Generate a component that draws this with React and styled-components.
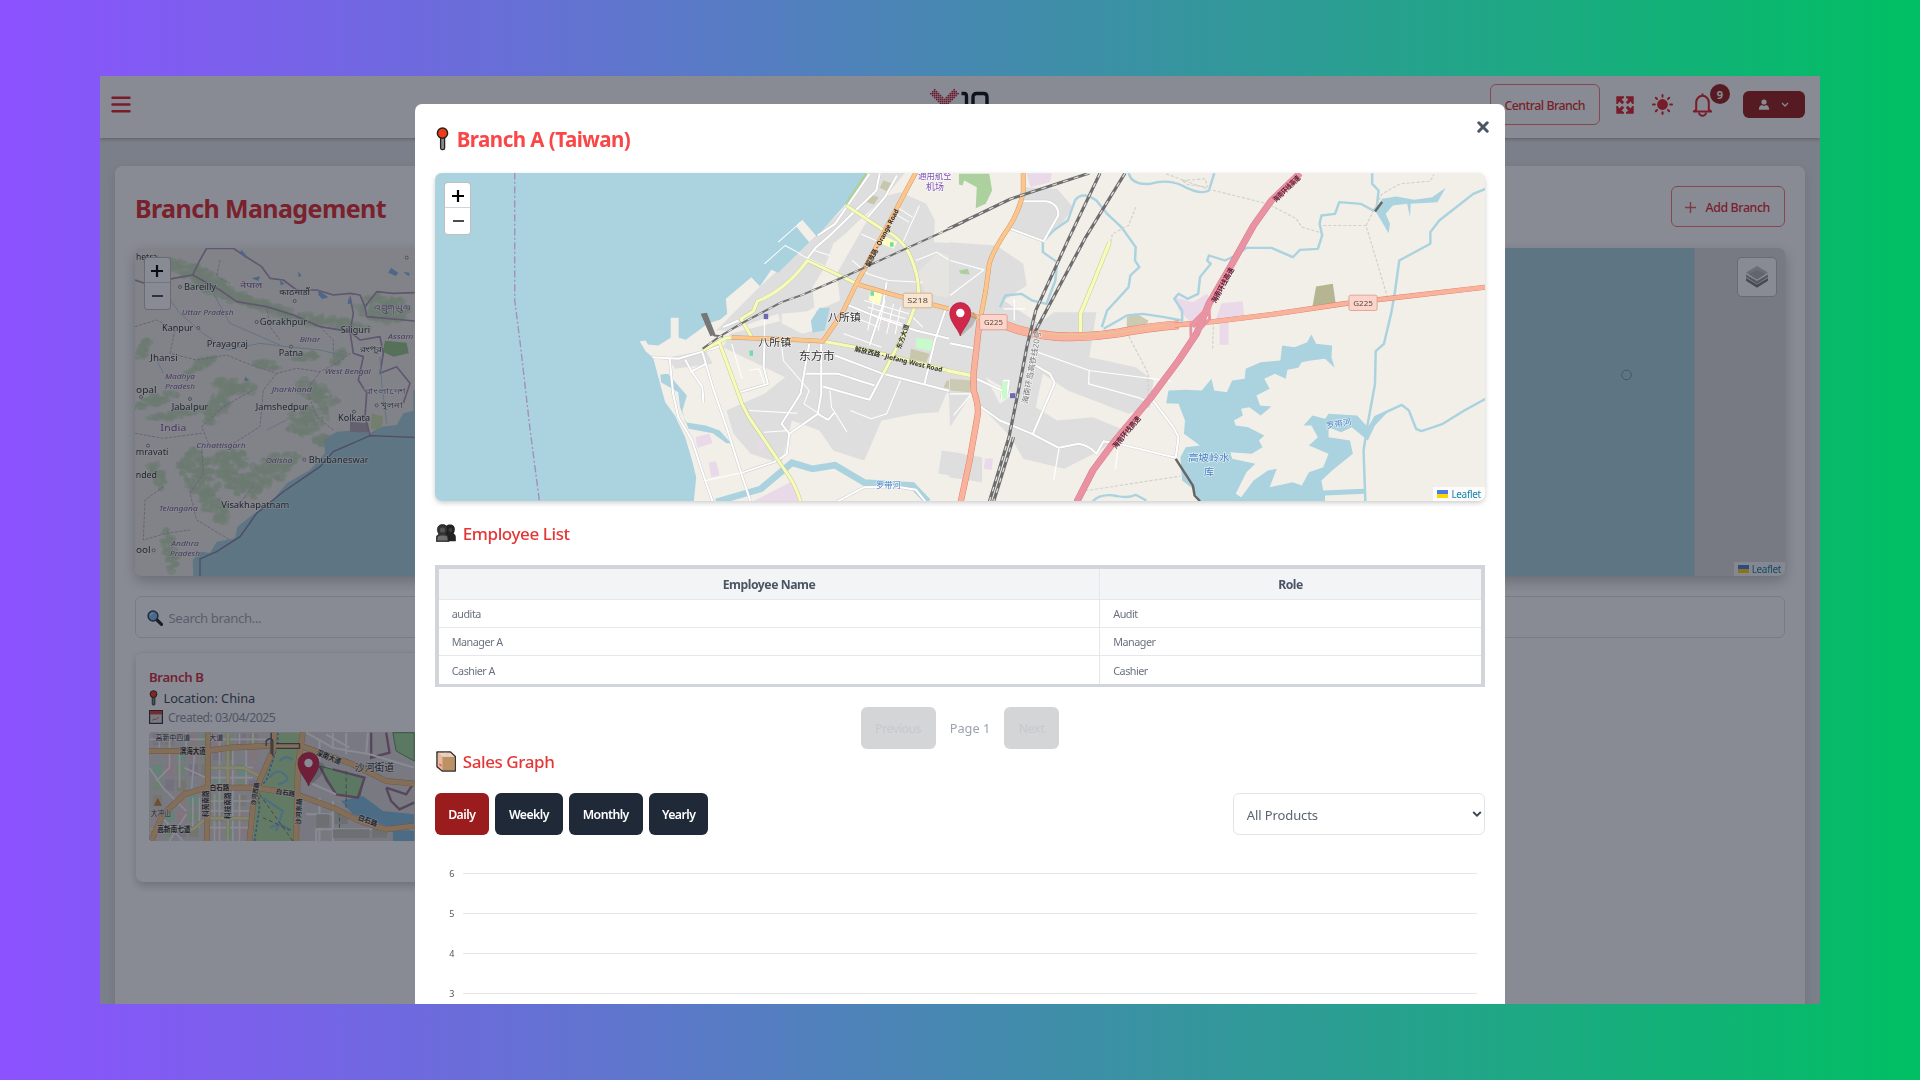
import React from "react";
import styled, { createGlobalStyle } from "styled-components";

const GlobalStyle = createGlobalStyle`
  * { box-sizing: border-box; }
  body {
    margin: 0;
    font-family: "Noto Sans", "Open Sans", "Noto Sans CJK SC", sans-serif;
  }
  svg { display: block; flex: none; }
`;

const Stage = styled.div`
  width: 1920px;
  height: 1080px;
  padding: 76px 100px;
  background: linear-gradient(90deg, #8c52ff, #00bf63);
  overflow: hidden;
`;

const Frame = styled.div`
  position: relative;
  width: 1719.5px;
  height: 928px;
  background: #e5e7eb;
  overflow: hidden;
`;

const Header = styled.header`
  display: grid;
  grid-template-columns: 1fr auto 1fr;
  align-items: start;
  height: 62px;
  background: #fff;
  box-shadow: 0 1px 4px rgba(0, 0, 0, 0.3);
`;

const MenuButton = styled.div`
  padding: 20px 0 0 11px;
`;

const LogoBox = styled.div`
  padding-top: 12px;
`;

const Tools = styled.div`
  display: flex;
  justify-content: flex-end;
  padding: 8px 14.5px 0 0;
`;

const OutlineButton = styled.div`
  display: flex;
  align-items: center;
  justify-content: center;
  gap: 9px;
  width: ${(p) => p.$width}px;
  height: 41px;
  padding-top: 1px;
  border: 1px solid #f87878;
  border-radius: 6px;
  color: #e02a30;
  font-size: 12.4px;
  font-weight: 500;
  letter-spacing: ${(p) => p.$track || 0}px;
  white-space: nowrap;
`;

const ToolIcon = styled.div`
  position: relative;
  margin-left: ${(p) => p.$left}px;
  padding-top: ${(p) => p.$top}px;
`;

const Badge = styled.div`
  position: absolute;
  left: 18px;
  top: 0;
  display: flex;
  align-items: center;
  justify-content: center;
  width: 20px;
  height: 20px;
  border-radius: 50%;
  background: #9b1c1c;
  color: #fff;
  font-size: 11px;
  font-weight: 700;
`;

const UserButton = styled.div`
  display: flex;
  align-items: center;
  justify-content: space-between;
  width: 62px;
  height: 27px;
  margin: 7px 0 0 30px;
  padding: 0 16px 0 15px;
  border-radius: 6px;
  background: #9b1c1c;
`;

const PageCard = styled.section`
  margin: 28px 14.5px 0 14.5px;
  height: 880px;
  padding: 20px 20px 0;
  border-radius: 8px;
  background: #fff;
  box-shadow: 0 4px 12px rgba(0, 0, 0, 0.12);
`;

const PageHead = styled.div`
  display: flex;
  justify-content: space-between;
  align-items: flex-start;
  height: 62px;
`;

const PageTitle = styled.h1`
  margin: 5px 0 0 0.5px;
  color: #e02a30;
  font-size: 25px;
  line-height: 34px;
  font-weight: 700;
  letter-spacing: -0.6px;
`;

const MapFrame = styled.div`
  position: relative;
  width: 100%;
  height: ${(p) => p.$height}px;
  border-radius: ${(p) => p.$radius || 7}px;
  overflow: hidden;
  background: ${(p) => p.$bg || "#ddd"};
`;

const MapShadow = styled.div`
  border-radius: 7px;
  box-shadow: ${(p) =>
    p.$soft ? "0 2px 5px rgba(0,0,0,.2)" : "0 5px 14px rgba(0,0,0,.25)"};
`;

const ZoomControl = styled.div`
  position: absolute;
  left: 9px;
  top: 9px;
  width: 27.5px;
  border: 1px solid rgba(0, 0, 0, 0.25);
  border-radius: 4px;
  background: #fff;
`;

const ZoomKey = styled.div`
  display: flex;
  align-items: center;
  justify-content: center;
  height: ${(p) => (p.$first ? 25 : 26)}px;
  padding-top: ${(p) => (p.$first ? 2 : 0)}px;
  border-bottom: ${(p) => (p.$first ? "1px solid #ccd6dc" : "0")};
`;

const LayersControl = styled.div`
  position: absolute;
  right: 8.5px;
  top: 9px;
  display: flex;
  align-items: center;
  justify-content: center;
  width: 40px;
  height: 40px;
  border: 1.5px solid rgba(0, 0, 0, 0.25);
  border-radius: 5px;
  background: #fff;
`;

const Attribution = styled.div`
  position: absolute;
  right: 0;
  bottom: 0;
  display: flex;
  align-items: center;
  gap: 3px;
  height: 14px;
  padding: 0 4px;
  background: rgba(255, 255, 255, 0.8);
  color: #1583ae;
  font-size: 10px;
  letter-spacing: -0.35px;
`;

const SearchBox = styled.div`
  display: flex;
  align-items: center;
  gap: 6px;
  height: 42px;
  margin-top: 20px;
  padding: 2px 0 0 11px;
  border: 1px solid #dcdfe4;
  border-radius: 6px;
  color: #a0a6b2;
  font-size: 13.2px;
  letter-spacing: -0.4px;
`;

const BranchCard = styled.article`
  width: 540px;
  height: 230px;
  margin: 14px 0 0 1px;
  padding: 15px 13.5px;
  border-radius: 7px;
  background: #fff;
  border-top: 1px solid #eceef1;
  box-shadow: 0 4px 9px rgba(0, 0, 0, 0.2);
`;

const BranchName = styled.div`
  height: 20px;
  color: #d12c3c;
  font-size: 13.2px;
  line-height: 19px;
  font-weight: 600;
  letter-spacing: -0.35px;
`;

const BranchLine = styled.div`
  display: flex;
  align-items: center;
  gap: ${(p) => p.$gap}px;
  height: ${(p) => p.$height}px;
  color: ${(p) => p.$color};
  font-size: ${(p) => p.$size}px;
  letter-spacing: ${(p) => p.$track || 0}px;
`;

const CardMap = styled.div`
  margin-top: 5px;
`;

const Overlay = styled.div`
  position: absolute;
  inset: 0;
  display: flex;
  justify-content: center;
  align-items: flex-start;
  padding-top: 28px;
  background: rgba(17, 24, 39, 0.5);
`;

const Modal = styled.div`
  position: relative;
  width: 1090px;
  height: 940px;
  padding: 20px;
  border-radius: 7px;
  background: #fff;
`;

const CloseButton = styled.div`
  position: absolute;
  right: 16px;
  top: 16.5px;
`;

const ModalTitle = styled.h2`
  display: flex;
  align-items: center;
  gap: 8px;
  height: 30px;
  margin: 0 0 19px;
  padding-left: 1px;
  color: #fa4646;
  font-size: 20.5px;
  font-weight: 700;
  letter-spacing: -0.52px;
`;

const SectionTitle = styled.h3`
  display: flex;
  align-items: center;
  gap: 6.5px;
  height: 28px;
  margin: ${(p) => p.$top}px 0 0;
  padding-left: 1.5px;
  color: #e53636;
  font-size: 17px;
  font-weight: 500;
  letter-spacing: ${(p) => p.$track}px;
`;

const Table = styled.div`
  height: 122px;
  margin-top: 18px;
  border: 4px solid #d1d5db;
`;

const Row = styled.div`
  display: grid;
  grid-template-columns: 661.5px 1fr;
  height: ${(p) => (p.$head ? 31 : 28)}px;
  background: ${(p) => (p.$head ? "#f3f4f6" : "#fff")};
  border-bottom: ${(p) => (p.$last ? "0" : "1px solid #e5e7eb")};
`;

const Cell = styled.div`
  display: flex;
  align-items: center;
  justify-content: ${(p) => (p.$head ? "center" : "flex-start")};
  padding-left: ${(p) => (p.$head ? 0 : 13)}px;
  border-right: ${(p) => (p.$first ? "1px solid #e5e7eb" : "0")};
  color: ${(p) => (p.$head ? "#4b5563" : "#6b7280")};
  font-size: ${(p) => (p.$head ? 12.2 : 10.8)}px;
  font-weight: ${(p) => (p.$head ? 700 : 400)};
  letter-spacing: ${(p) => (p.$head ? -0.45 : -0.5)}px;
`;

const Pager = styled.div`
  display: flex;
  justify-content: center;
  align-items: center;
  gap: 14px;
  margin-top: 20px;
  height: 42px;
  color: #9ca3af;
  font-size: 12.8px;
`;

const PagerButton = styled.div`
  display: flex;
  align-items: center;
  justify-content: center;
  width: ${(p) => p.$width}px;
  height: 42px;
  border-radius: 6px;
  background: #d4d5d7;
  color: #c7cbce;
  font-size: 12.3px;
  font-weight: 500;
  letter-spacing: -0.5px;
`;

const Controls = styled.div`
  display: flex;
  justify-content: space-between;
  margin-top: 17.5px;
`;

const RangeGroup = styled.div`
  display: flex;
  gap: 6.4px;
`;

const RangeButton = styled.div`
  display: flex;
  align-items: center;
  justify-content: center;
  width: ${(p) => p.$width}px;
  height: 42px;
  padding-top: 1px;
  border-radius: 6px;
  background: ${(p) => (p.$active ? "#9b1c1c" : "#1f2937")};
  color: #fff;
  font-size: 12.3px;
  font-weight: 600;
  letter-spacing: -0.55px;
`;

const SelectBox = styled.div`
  display: flex;
  align-items: center;
  justify-content: space-between;
  width: 252px;
  height: 42px;
  padding: 2px 2px 0 13px;
  border: 1px solid #e1e4e8;
  border-radius: 6px;
  color: #5b6472;
  font-size: 13px;
  letter-spacing: -0.1px;
`;

const Chart = styled.div`
  display: flex;
  flex-direction: column;
  margin-top: 19px;
`;

const Tick = styled.div`
  display: flex;
  align-items: center;
  gap: 8.5px;
  height: 40px;
  padding: 0 8px 0 14.5px;
  color: #555;
  font-size: 9px;
`;

const GridLine = styled.div`
  flex: 1;
  height: 1px;
  background: #e6e6e6;
`;

/* ---------- icons ---------- */

const Pushpin = ({ w = 13, h = 24 }) => (
  <svg width={w} height={h} viewBox="0 0 13 24">
    <rect x="4.6" y="9" width="4" height="13.6" rx="1.6" fill="#8c8c8c" stroke="#222" strokeWidth="1.3" />
    <circle cx="6.5" cy="6.2" r="5.1" fill="#f03a17" stroke="#222" strokeWidth="1.5" />
  </svg>
);

const People = () => (
  <svg width="20" height="18" viewBox="0 0 20 18">
    <path d="M9 16V5.5C9 2 11 .6 14 .6s5 1.6 4.8 5c0 2-.8 3.4-1.2 4.2 1.5.6 2.2 1.7 2.2 3.4v4H9z" fill="#222" />
    <path d="M.3 17.6v-3.2c0-2 .8-3.6 2.8-4.2C1.8 8.6 1.4 7 1.4 5.4 1.6 2 3.6.6 6.5.6s5.1 1.5 5.1 4.800c0 1.800-.5 3.300-1.500 4.600 1.900.7 2.800 2.100 2.800 4.200v3.400z" fill="#333" stroke="#181818" strokeWidth=".7" />
    <path d="M1.500 16.600v-2c0-2 1.400-3 3.300-3h3.400c2 0 3.300 1 3.300 3v2z" fill="#6f6f6f" />
    <circle cx="6.500" cy="6" r="2.600" fill="#555" />
    <circle cx="14.500" cy="6" r="2" fill="#3d3d3d" />
  </svg>
);

const Box = () => (
  <svg width="20" height="21" viewBox="0 0 20 21">
    <path d="M1 1h13.500l4.800 4.500v14.500H6.200L1 15.600z" fill="#d9b48c" stroke="#333" strokeWidth="1.500" strokeLinejoin="round" />
    <path d="M1.800 1.800h12.400l4.300 4H6.500z" fill="#ecd3bb" />
    <path d="M1.800 2.200l4.700 4v13L1.800 15.200z" fill="#e6b9a0" />
    <path d="M6.500 6h12v13.200h-12z" fill="#bd9166" />
    <path d="M8.500 1.800l3.500 4h2l-3.500-4z" fill="#d5cdd0" />
    <path d="M3 12.500l2.500 1v2l-2-1z" fill="#f0506a" />
  </svg>
);

const Magnifier = () => (
  <svg width="16" height="16" viewBox="0 0 16 16">
    <path d="M9.500 9.500l5 4.800" stroke="#222" strokeWidth="3.200" strokeLinecap="round" />
    <circle cx="6" cy="6" r="4.900" fill="#80bdf0" stroke="#2e3e55" strokeWidth="1.500" />
    <path d="M3.500 5.500a2.500 2.500 0 0 1 2.500-2.300" stroke="#e8f4ff" fill="none" />
  </svg>
);

const Calendar = () => (
  <svg width="14" height="14" viewBox="0 0 14 14">
    <rect x=".6" y=".6" width="12.800" height="12.800" fill="#ddd" stroke="#333" strokeWidth="1.200" />
    <rect x="1" y="1" width="12" height="3.400" fill="#d8402c" />
    <path d="M3 10.500l2-1.500 2 .5 3-2.500" stroke="#c77" fill="none" />
  </svg>
);

const Plus = ({ size = 12, w = 2, color = "#000" }) => (
  <svg width={size} height={size} viewBox="0 0 12 12">
    <path d="M6 0v12M0 6h12" stroke={color} strokeWidth={w} />
  </svg>
);

const Minus = () => (
  <svg width="14" height="12" viewBox="0 0 14 12">
    <path d="M2 6h11" stroke="#111" strokeWidth="1.600" />
  </svg>
);

const Layers = () => (
  <svg width="24" height="24" viewBox="0 0 24 24">
    <path d="M1 13l11 6.500L23 13v2.800l-11 7-11-7z" fill="#7c7c7c" />
    <path d="M1 9.500L12 16l11-6.500v2.600l-11 7-11-7z" fill="#989898" />
    <path d="M12 1l11 6.500-11 7-11-7z" fill="#c4c4c4" />
    <path d="M12 5l8.500 4-8.500 5.500L3.500 9z" fill="#b2b2b2" />
  </svg>
);

const UkraineFlag = () => (
  <svg width="11" height="8" viewBox="0 0 11 8">
    <rect width="11" height="4" fill="#4c7be1" />
    <rect y="4" width="11" height="4" fill="#ffd500" />
  </svg>
);

const Marker = ({ x, y }) => (
  <g transform={`translate(${x} ${y})`}>
    <path d="M1 0L12-10 17-19 13-24 4-14z" fill="#333" opacity=".22" />
    <path d="M0 0C-2-7-10.500-14-10.500-23a10.500 10.500 0 0 1 21 0C10.500-14 2-7 0 0z" fill="#d0274a" stroke="#a31d3b" strokeWidth=".7" />
    <circle cy="-23" r="4.200" fill="#fff" />
  </g>
);

/* first and last dot column of the logo's left arm, row by row */
const armRows = [[2, 2], [1, 3], [0, 4], [1, 5], [2, 6], [3, 7], [4, 7], [5, 7], [6, 7]];

const Logo = () => {
  const dots = [];
  armRows.forEach(([from, to], r) => {
    for (let c = from; c <= to; c++) {
      dots.push([c, r]);
      if (c !== 7) dots.push([14 - c, r]);
    }
  });
  return (
    <svg width="60" height="40" viewBox="0 0 60 40">
      {dots.map(([c, r]) => (
        <rect key={c + "-" + r} x={c * 1.950} y={1 + r * 1.950} width="1.550" height="1.550" fill="#c4152c" />
      ))}
      <path d="M31.500 5.500h3q2 0 2 3v14M43 23V9q0-3.500 3.500-3.500h7q3.500 0 3.500 3.500V23" fill="none" stroke="#0b0f18" strokeWidth="3.400" />
    </svg>
  );
};

const Expand = () => (
  <svg width="18" height="18" viewBox="0 0 18 18" fill="#e0202c">
    {[0, 90, 180, 270].map((a) => (
      <path key={a} transform={`rotate(${a} 9 9)`} d="M.3.3H8v1.500L5.600 3.400l2.600 2.800-2 2L3.400 5.600 1.800 8H.3z" />
    ))}
  </svg>
);

const Sun = () => (
  <svg width="21" height="21" viewBox="0 0 21 21">
    <circle cx="10.500" cy="10.500" r="5.400" fill="#e0202c" />
    {[0, 45, 90, 135, 180, 225, 270, 315].map((a) => (
      <path key={a} transform={`rotate(${a} 10.500 10.500)`} d="M10.500 1v1.800" stroke="#e0202c" strokeWidth="2" strokeLinecap="round" />
    ))}
  </svg>
);

const Bell = () => (
  <svg width="21" height="24" viewBox="0 0 21 24" fill="none" stroke="#e0202c" strokeWidth="2">
    <path d="M10.500 .5v2M4.200 16.500V9.600a6.300 6.800 0 0 1 12.600 0v6.900l2.400 2H1.800z" strokeLinejoin="round" />
    <path d="M7 19.500a3.500 3.300 0 0 0 7 0" />
  </svg>
);

const ZoomButtons = () => (
  <ZoomControl>
    <ZoomKey $first><Plus w={2.200} /></ZoomKey>
    <ZoomKey><Minus /></ZoomKey>
  </ZoomControl>
);

const LeafletCredit = () => (
  <Attribution><UkraineFlag />Leaflet</Attribution>
);

/* ---------- map drawing ---------- */

const Roads = ({ list, color, width, casing, dash }) => (
  <g fill="none" strokeLinejoin="round">
    {casing && list.map((d, i) => <path key={"c" + i} d={d} stroke={casing} strokeWidth={width + 2.500} />)}
    {list.map((d, i) => <path key={i} d={d} stroke={color} strokeWidth={width} strokeDasharray={dash} />)}
  </g>
);

const Label = ({ x, y, s, r = 0, c = "#333", halo = "#fff", children, italic, anchor = "middle", len, bold }) => (
  <text
    transform={`translate(${x} ${y}) rotate(${r})`}
    fontSize={s}
    fill={c}
    stroke={halo}
    strokeWidth={halo === "none" ? 0 : 4}
    strokeOpacity=".6"
    paintOrder="stroke"
    fontStyle={italic ? "italic" : "normal"}
    fontWeight={bold ? 700 : 400}
    textAnchor={anchor}
    textLength={len}
    lengthAdjust="spacingAndGlyphs"
  >
    {children}
  </text>
);

const Shield = ({ x, y, w, h, fill, stroke, children }) => (
  <g>
    <rect x={x} y={y} width={w} height={h} rx="5" fill={fill} stroke={stroke} strokeWidth="2.500" />
    <text x={x + w / 2} y={y + h / 2 + 9} fontSize="24" textAnchor="middle" fill="#5c463a" textLength={w - 24} lengthAdjust="spacingAndGlyphs">
      {children}
    </text>
  </g>
);

const CityMap = () => (
  <svg width="1050" height="328" viewBox="435 172.500 1050 328">
    <rect x="435" y="172" width="1050" height="330" fill="#f2efe9" />
    <g transform="translate(420 100) scale(.34440 .33333)">
      <g fill="#dedede">
        <path d="M1296 215H1410L1350 290 1290 345 1235 400 1200 430 1175 500 1140 560 1145 620 1050 680 1040 640 900 690 860 690 985 560 1150 405 1240 315z" />
        <path d="M1290 375L1340 290 1395 275 1470 310 1495 360 1492 425 1580 430V900L1530 875 1505 935 1440 940 1340 960 1290 1080 1200 1050 1160 990 1080 960 1050 1090 960 1060 910 1000 890 930 1000 880 1060 830 880 740 900 700 1130 640 1220 600 1210 520z" />
        <path d="M720 770L830 750 850 790 740 805zM1515 1050L1580 1060V1130L1505 1120z" />
      </g>
      <path d="M1050 640L1150 630 1145 690 1110 700 1050 668z" fill="#f2efe9" />
      <path d="M1505 455L1580 480V560L1530 590 1470 580 1440 520z" fill="#e6e4e0" />
      <path d="M44 215H1298L1235 312 1152 408 1110 358 1092 377 1130 425 1040 517 1020 508 987 557 962 530 888 595 892 640 872 657 835 670 772 718 751 712V652H728V712L692 735 662 732 655 720 638 722 655 752 677 772 700 860 712 905 740 945 770 1010 790 1080 802 1130 795 1205H40z" fill="#aad3df" />
      <path d="M1160 622H1190L1175 690 1140 697 1135 660zM698 822L720 820 745 850 775 885 762 930 770 965 830 975 870 990 903 1028 890 1028 850 998 780 985 755 920 750 875 700 845z" fill="#aad3df" />
      <path d="M860 1204L990 1165 1080 1087 1140 1105 1205 1094 1290 1146 1430 1155 1475 1204" fill="none" stroke="#aad3df" strokeWidth="20" />
      <path d="M1296 220L1238 312" stroke="#add19e" strokeWidth="10" />
      <g fill="#ead9e8">
        <path d="M800 1010L840 1000 850 1028 805 1042zM838 1085L860 1082 870 1125 845 1130zM965 1204L1075 1145 1110 1204zM980 1025L1000 1020 995 1050 978 1045zM1340 652L1420 672V688L1340 665z" />
      </g>
      <g fill="#c8c7ab">
        <path d="M1345 240L1370 248 1355 272 1335 262zM1310 283L1332 290 1318 312 1297 305zM1425 745L1480 760 1470 785 1422 775zM1530 840L1580 840V875L1520 860z" />
      </g>
      <path d="M1440 712L1490 718 1485 752 1440 742z" fill="#c8facc" />
      <path d="M1345 405L1385 425 1375 445 1340 430zM1308 570L1342 580 1335 612 1303 600z" fill="#ffffc4" />
      <path d="M1365 425h10v14h-10zM1308 572h10v14h-10zM957 750h10v16h-10z" fill="#6fdcae" />
      <Roads
        color="#fff"
        width={6}
        casing="#c9c9c9"
        list={[
          "M675 770L750 775 825 752 880 735",
          "M725 775L735 880 750 950 790 1020 825 1130 850 1204",
          "M820 755L850 860 890 980 930 1110 960 1204",
          "M770 778L790 815 820 860 823 908M785 815L830 790",
          "M940 1115L1035 1082 1065 1060 1072 1000 1050 970 1105 880 1120 790 1130 730",
          "M1035 1082L1020 1050M1072 1000L1155 940 1165 880 1165 730",
          "M1120 820H1215L1320 855M1170 858L1305 898 1345 820M1345 820L1568 880M1205 765L1345 820",
          "M1155 940L1185 958 1205 935M1335 218L1325 270 1190 405 1150 440 1120 480",
          "M1385 225L1350 290 1300 350M1305 220L1205 370 1155 405",
          "M1355 545L1345 610 1305 735M1235 610L1340 655 1440 690 1568 722M1525 630L1495 720 1465 850",
          "M1000 730L998 800 1010 850 930 875M1210 1204L1290 1160 1380 1158 1440 1168 1468 1204",
          "M880 680L925 660",
        ]}
      />
      <Roads
        color="#fff"
        width={3}
        list={[
          "M1040 425L1095 375 1105 365M1000 490L1060 435 1105 460M955 1204M830 1140L940 1115",
          "M1280 400L1345 430M1385 320L1430 350M1380 340L1420 365M1450 315L1400 430M1440 480L1500 455 1545 485 1568 480",
          "M1290 600L1420 640M1300 620L1410 655M1290 635L1400 670M1320 590L1300 690M1350 600L1330 690M1375 610L1355 700M1395 620L1380 700",
          "M1240 640L1330 680M1255 480L1300 520 1360 540 1460 545M905 730L935 835M1050 735L1055 780 1130 870 1115 910 1160 940",
          "M1190 870L1195 920 1240 995M1395 840L1355 940 1310 955 1250 930M955 930L1095 938M1000 995L1070 990M1000 640V760",
          "M1100 460L1180 500M1145 450L1190 465M955 810L985 805 1000 850M1550 880L1540 950M1230 700L1340 740M1430 650L1460 680",
        ]}
      />
      <Roads
        color="#f6fabb"
        width={9}
        casing="#c3c78a"
        list={[
          "M1238 315L1340 385Q1400 410 1425 470 1450 530 1447 580 1430 650 1400 710L1345 820",
          "M820 750L890 712H915M870 728L935 910 955 950 1060 1110Q1090 1150 1105 1204",
          "M962 708L932 655 968 632 980 602Q1060 570 1125 480L1265 548",
          "M1170 722L1265 740 1400 775 1580 822",
        ]}
      />
      <Roads
        color="#fcc58d"
        width={11}
        casing="#cf9a5c"
        list={["M1440 215L1345 400 1268 548 1225 640 1170 722 1060 716 905 711", "M1265 550L1400 590 1580 636"]}
      />
      <Roads color="#707070" width={6} list={["M1580 365L1240 525 1110 583 1050 605 935 668 870 708 820 745", "M820 640L838 685 855 705 880 708"]} />
      <Roads color="#eee" width={3} dash="14 20" list={["M1580 365L1240 525 1110 583 1050 605 935 668 870 708 820 745"]} />
      <path d="M815 640l18-3 25 65-15 5z" fill="#777" />
      <path d="M275 215V600L290 720 320 990 347 1204" fill="none" stroke="#a48fb5" strokeWidth="4" strokeDasharray="22 7 6 7" />
      <rect x="998" y="640" width="13" height="16" fill="#6a6ab5" />
      <Label x="1495" y="236" s="30" c="#7a4fb8" len="96">通用航空</Label>
      <Label x="1495" y="270" s="26" c="#7a4fb8">机场</Label>
      <Label x="1232" y="663" s="32">八所镇</Label>
      <Label x="1030" y="738" s="32">八所镇</Label>
      <Label x="1152" y="780" s="35">东方市</Label>
      <Label x="1348" y="415" s="20" r="-63" halo="none" bold len="190">解放路 · Orange Road</Label>
      <Label x="1388" y="783" s="20" r="14" halo="none" bold len="262">解放西路 · Jiefang West Road</Label>
      <Label x="1408" y="710" s="19" r="-72" halo="none" bold len="76">东方大道</Label>
      <Label x="1360" y="1163" s="24" c="#4a80c4">罗带河</Label>
      <Shield x={1403} y={578} w={84} h={44} fill="#f6e6d2" stroke="#cda97d">S218</Shield>
    </g>
    <g transform="translate(950 160) scale(.35714 .33333)">
      <g fill="#dedede">
        <path d="M-3 245L130 255 205 310 215 375 150 420 250 490 290 455 410 455 390 590 520 620 570 660 560 740 500 760 330 690 260 640 240 740 300 780 400 770 490 810 420 870 320 925 205 895 170 830 90 740 60 700 0 800-3 700z" />
        <path d="M205 80L300 85 345 140 320 180 270 240 165 200zM-3 875L90 890V965L-3 950z" />
      </g>
      <path d="M100 650L180 700 140 730z" fill="#f2efe9" />
      <path d="M25 40H110L118 90 100 130 72 143 75 80 40 60 35 75 25 72zM25 330L50 325 55 342 30 340z" fill="#add19e" />
      <path d="M1025 378L1072 370 1080 430 1015 438z" fill="#b5b591" />
      <path d="M495 470L520 458 555 480 550 500 495 500zM0 655L60 660 55 695 0 690z" fill="#cbcab2" />
      <path d="M215 38H285L280 65 225 80zM630 410L680 425 720 400 735 445 690 500 640 450zM760 428L820 422 823 465 780 475V553H755V490H740zM98 895L120 893 117 928 95 925z" fill="#ead9e8" />
      <g fill="#aad3df">
        <path d="M612 690L660 688 705 690 732 655 740 690 775 695 790 660 825 655 828 625 870 605 925 600 930 555 965 560 1000 545 1012 522 1025 550 1070 555 1068 590 1077 622 1050 595 1010 600 985 605 975 622 945 628 940 655 910 640 880 655 895 685 858 705 868 735 900 738 870 765 838 740 815 745 820 765 795 780 800 795 835 800 880 825 865 840 875 860 845 880 785 875 790 895 855 910 830 935 800 1000 815 1010 850 960 890 930 915 925 895 980 960 965 985 975 1005 935 1045 920 1060 880 1005 855 1030 830 1012 795 990 795 1015 765 1050 775 1060 760 1140 765 1170 800 1190 770 1225 755 1190 795 1170 840 1125 800 1095 815 1060 800 1060 830 1120 840 1128 880 1070 930 1040 960 1045 990 1160 985V1000L1050 1005V1022H700L680 985 650 960 645 890 660 860 700 855 655 820 658 780 640 730 605 728z" />
        <path d="M1210 115L1250 108 1300 118 1350 110 1388 82 1365 125 1290 130 1288 170 1280 130 1240 135 1220 160 1232 190 1228 218 1210 185 1190 150z" />
      </g>
      <Roads
        color="#aad3df"
        width={7}
        list={[
          "M500 38Q510 75 560 70 610 55 650 75 700 105 725 90L740 38",
          "M425 500L440 450 500 380 505 345 530 320 518 300 520 260 480 200 440 160 410 120Q370 90 350 120L330 180 290 210 260 240V275L300 305 295 360 270 430 230 420 200 400 155 405 140 440",
          "M1182 38V70L1200 90 1195 140 1185 150 1150 130 1090 125 1078 160 1040 165 1035 190 1042 225 1030 265 980 268 960 290 900 262 830 262 800 285 770 300 725 285 720 300 730 310 700 350 695 400 665 415 640 400 628 415 650 450 650 480 600 470 540 460 495 465 455 490 430 505",
          "M1500 85L1465 100 1370 180 1345 215V250L1258 300 1245 400 1235 460 1215 550 1192 572 1190 670 1168 800 1158 870 1163 1022",
          "M1170 810L1190 770 1265 733 1285 750 1305 805 1320 812 1380 790 1440 750 1500 715",
          "M400 1022Q420 1000 460 1005 500 1015 520 1003L550 1020",
        ]}
      />
      <Roads
        color="#fff"
        width={6}
        casing="#cbcbcb"
        list={[
          "M205 122L270 122Q305 130 303 165L262 242 165 203",
          "M75 655L145 690M85 738L140 780 230 820 305 862 360 850Q390 855 410 880L430 842 480 852 632 892",
          "M632 892L640 830 625 800 565 715M232 820L293 668 280 640 240 615M0 548L68 563M145 715L150 660 165 660 160 700",
        ]}
      />
      <Roads
        color="#fff"
        width={3.500}
        list={["M245 575L390 630 620 662M390 630L388 670 530 712 545 720M0 405L95 328 0 300M180 415V480M150 445H210M0 700H60L10 765M305 865L290 960M470 870L463 925"]}
      />
      <Roads
        color="#d4d1cc"
        width={3.500}
        dash="9 5"
        list={[
          "M605 40L720 85 890 130 970 175 985 200 1040 217M1045 195H1165L1225 410M1165 195L1210 100 1260 70 1345 62 1355 42",
          "M520 140L500 195 455 220 450 245M495 515L555 640V710M365 993L645 947M738 485L735 570M650 60L715 55 720 80 665 72z",
        ]}
      />
      <Roads color="#f6fabb" width={10} casing="#c3c78a" list={["M447 245L400 370 365 460V530M-10 630L60 645"]} />
      <Roads color="#fcc58d" width={11} casing="#cf9a5c" list={["M205 38V95Q195 150 165 200 120 270 110 310L100 390 85 475M55 460L90 475"]} />
      <Roads color="#f9b29c" width={15} casing="#de7c62" list={["M83 480L66 640V690Q80 730 78 760L55 900 30 1024"]} />
      <Roads color="#f9b29c" width={24} casing="#de7c62" list={["M150 492Q210 520 300 528 400 533 500 512 560 500 640 493"]} />
      <Roads color="#e6c98e" width={3} list={["M230 516Q370 530 480 514L600 494"]} />
      <Roads color="#f9b29c" width={13} casing="#de7c62" list={["M630 494L740 483 900 462 1100 430 1500 380"]} />
      <Roads color="#e892a2" width={17} casing="#dc7890" list={["M980 38L900 120 850 195 790 310 725 430 690 520 640 600 560 715 455 850 400 930 355 1024"]} />
      <Roads color="#e892a2" width={8} list={["M725 430L727 475 690 520M722 440L674 492 675 545M705 470L680 500"]} />
      <Roads
        color="#6d6d6d"
        width={9}
        list={["M-5 205L170 115 390 38M420 38L330 240 240 450 215 560 190 700 165 830 110 1024M490 38L380 230 270 450 235 520M178 830L122 1024"]}
      />
      <Roads
        color="#e4e4e4"
        width={3.500}
        dash="14 18"
        list={["M-5 205L170 115 390 38M420 38L330 240 240 450 215 560 190 700 165 830 110 1024M490 38L380 230 270 450 235 520M178 830L122 1024"]}
      />
      <Roads color="#666" width={7} list={["M632 895L680 975 685 1005 700 1022M1190 153L1210 124"]} />
      <rect x="145" y="662" width="15" height="52" rx="4" fill="#c8facc" />
      <rect x="168" y="698" width="15" height="15" fill="#6a6ab5" />
      <Label x="948" y="90" s="21" r="-46" c="#5a1a30" halo="none" bold len="100">海南环线高速</Label>
      <Label x="770" y="378" s="21" r="-63" c="#5a1a30" halo="none" bold len="115">海南环线高速</Label>
      <Label x="500" y="820" s="21" r="-52" c="#5a1a30" halo="none" bold len="115">海南环线高速</Label>
      <Label x="236" y="622" s="22" r="-80" c="#777" len="220">海南环岛高铁线20号</Label>
      <Label x="725" y="902" s="29" c="#4a80c4">高坡岭水</Label>
      <Label x="725" y="944" s="28" c="#4a80c4">库</Label>
      <Label x="1090" y="798" s="24" r="-10" c="#4a80c4">罗带河</Label>
      <Shield x={83} y={462} w={77} h={46} fill="#fbd5cb" stroke="#db9d8d">G225</Shield>
      <Shield x={1117} y={404} w={79} h={46} fill="#fbd5cb" stroke="#db9d8d">G225</Shield>
    </g>
    <Marker x={960.300} y={335.500} />
  </svg>
);

const towns = [
  [240, 150, "Bareilly", 96], [490, 255, "Gorakhpur", 142], [173, 274, "Kanpur", 94],
  [322, 320, "Prayagraj", 124], [513, 349, "Patna", 73], [132, 364, "Jhansi", 82],
  [706, 279, "Siliguri", 88], [210, 511, "Jabalpur", 110], [486, 511, "Jamshedpur", 158],
  [702, 542, "Kolkata", 96], [656, 669, "Bhubaneswar", 180], [406, 805, "Visakhapatnam", 204],
  [96, 646, "mravati", 98], [79, 715, "nded", 64], [79, 459, "opal", 62], [70, 940, "ool", 44],
  [80, 60, "hetra", 64], [524, 166, "काठमाडौं", 92], [752, 336, "রংপুর", 66], [815, 505, "খুলনা", 62],
];
const states = [
  [263, 225, "Uttar Pradesh", 155], [570, 307, "Bihar", 62], [180, 416, "Madhya", 90], [180, 447, "Pradesh", 90],
  [515, 455, "Jharkhand", 120], [683, 403, "West Bengal", 138], [303, 623, "Chhattisgarh", 148],
  [477, 670, "Odisha", 80], [175, 813, "Telangana", 116], [195, 918, "Andhra", 82], [195, 948, "Pradesh", 90],
  [842, 298, "Assam", 76],
];
const woods = [
  [230, 110, 90, 26, 25], [330, 165, 90, 16, 20], [480, 215, 120, 14, 18], [640, 245, 90, 12, 10], [790, 205, 70, 36, 5],
  [350, 440, 60, 20, 5], [290, 500, 50, 26, -60], [240, 375, 45, 10, -25], [440, 375, 30, 14, 10], [590, 460, 60, 24, 30],
  [560, 540, 60, 34, -20], [330, 660, 44, 30, 0], [240, 700, 70, 46, 60], [450, 690, 80, 36, -30], [360, 730, 60, 28, 30],
  [280, 800, 50, 24, 50], [150, 930, 60, 16, 80], [110, 480, 70, 14, -20], [70, 330, 36, 12, -60], [130, 70, 50, 14, 10],
  [620, 600, 34, 16, 0], [110, 700, 44, 14, 70], [560, 350, 40, 8, -10], [655, 350, 24, 10, -60], [180, 520, 90, 10, -10],
];

/* deterministic speckles scattered over each wooded area */
const speckles = [];
let seed = 7;
const next = () => {
  seed = (seed * 16807) % 2147483647;
  return seed / 2147483647;
};
woods.forEach(([cx, cy, rx, ry, a]) => {
  const rad = (a * Math.PI) / 180;
  const count = Math.round((rx * ry) / 24) + 14;
  for (let i = 0; i < count; i++) {
    const t = next() * Math.PI * 2;
    const k = Math.pow(next(), 0.6) * 1.15;
    const u = Math.cos(t) * rx * k;
    const v = Math.sin(t) * ry * k;
    speckles.push([
      Math.round(cx + u * Math.cos(rad) - v * Math.sin(rad)),
      Math.round(cy + u * Math.sin(rad) + v * Math.cos(rad)),
      4 + Math.round(next() * 12),
      4 + Math.round(next() * 7),
    ]);
  }
});

const RegionMap = () => (
  <svg width="1650" height="328" viewBox="135 248 1650 328">
    <rect x="135" y="248" width="1650" height="328" fill="#f2efe9" />
    <g transform="translate(120 240) scale(.33333)">
      <g fill="#a9cf9c" opacity=".62">
        {speckles.map(([x, y, w, h], i) => (
          <ellipse key={i} cx={x} cy={y} rx={w} ry={h} opacity=".55" />
        ))}
      </g>
      <path d="M795 302L860 308 866 340 820 350 788 335z" fill="#9cc98c" />
      <path d="M220 1010L218 960 240 935 270 938 290 905 345 895 352 860 400 822 450 790 500 730 570 690 615 640 612 600 650 575 690 572 750 580 780 560 830 555 850 520 890 510V1010z" fill="#aad3df" />
      <rect x="880" y="450" width="3860" height="570" fill="#aad3df" />
      <rect x="1100" y="0" width="3640" height="500" fill="#aad3df" />
      <path d="M690 545L745 550V578L690 575z" fill="#b7a9b9" />
      <path d="M755 520L790 530 785 565 752 568z" fill="#d5e6b0" />
      <g fill="none" stroke="#b094b6" strokeWidth="5" strokeLinejoin="round">
        <path d="M45 120L90 135 160 115 218 105 240 60 260 25H340L370 45 425 80 450 115 490 120 530 150 590 150 640 165 690 160 720 165 735 200 770 155 820 160 884 158" />
        <path d="M218 105L300 150 350 185 440 200 520 225 600 260 690 275 700 220 690 170M735 200L740 230 884 243M690 275L700 340 730 350 715 420 740 460 735 530 750 585" />
        <path d="M690 275L720 300 780 290 790 340 780 400 830 380 870 430 850 490" />
      </g>
      <path d="M884 592L750 587 640 635 600 680 490 755 410 820 360 890 290 935 240 957V1010" fill="none" stroke="#8b7fa8" strokeWidth="4" />
      <g fill="none" stroke="#c7aacb" strokeWidth="3" strokeDasharray="9 4">
        <path d="M45 260L110 240 165 270 150 340 230 360 320 345 380 370 470 400 530 385 600 395 650 370 690 340" />
        <path d="M470 400L430 450 420 560 340 610 270 620 245 560 310 500 400 450M45 580L130 595 245 580M245 620L250 700 210 760 230 840 330 900" />
        <path d="M600 395L560 450 590 530 640 570M440 200L450 260 480 300M130 740L75 780 70 900 140 880 210 870M400 740L350 800 300 790M600 260L640 300 640 350M300 60L290 110 330 130" />
      </g>
      <g fill="none" stroke="#b4d0e0" strokeWidth="3">
        <path d="M130 150L180 220 250 280 320 330 420 310 500 320 600 330 680 350M280 160L330 250 480 315M780 350L785 430 800 550M110 360L130 400M500 540L440 570" />
      </g>
      <g fill="#86b7e8">
        <path d="M365 30l18 22-8 2-14-18zM395 115l25-6-5 14zM480 120l14 12-12 4zM595 150l30 22-18 5-12-12zM685 175l12 14-14 4zM535 95l10 12-10 4zM805 98l8-14 22 14-8 10zM375 410l12 10-14 4zM850 95l20 4-4 10z" />
      </g>
      {states.map(([x, y, t, l]) => (
        <Label key={t + x + y} x={x} y={y} s="22" c="#7f5a92" italic len={l}>{t}</Label>
      ))}
      <Label x="160" y="574" s="27" c="#7f5a92" len="78">India</Label>
      <Label x="394" y="144" s="25" c="#7f5a92" len="66">नेपाल</Label>
      <Label x="797" y="463" s="25" c="#7f5a92" len="126">বাংলাদেশ</Label>
      <Label x="818" y="213" s="24" c="#7f5a92" len="110">འབྲུགཡུལ</Label>
      {towns.map(([x, y, t, l]) => (
        <Label key={t} x={x} y={y} s="25" c="#333" len={l}>{t}</Label>
      ))}
      <g fill="#fff" stroke="#555" strokeWidth="2">
        {[[180, 141], [410, 246], [235, 264], [513, 320], [210, 477], [770, 496], [101, 931], [63, 471], [860, 53], [524, 183], [84, 617], [702, 515], [553, 659]].map(([x, y]) => (
          <circle key={x + "-" + y} cx={x} cy={y} r="4.500" />
        ))}
      </g>
    </g>
    <rect x="1694.500" y="248" width="91" height="328" fill="#ddd" />
    <circle cx="1626.500" cy="375" r="4.800" fill="none" stroke="#7c93a6" strokeWidth="1" />
  </svg>
);

const blocks = [];
for (let i = 0; i < 9; i++) {
  for (let j = 0; j < 7; j++) {
    blocks.push([100 + i * 36, 458 + j * 46, (i * 5 + j * 3) % 7]);
  }
}

const DistrictMap = () => (
  <svg width="512" height="109" viewBox="149.500 731 512 109">
    <rect x="149" y="731" width="513" height="110" fill="#dfdbdb" />
    <g transform="translate(120 580) scale(.33333)">
      {blocks.map(([x, y, k]) => (
        <rect key={x + "-" + y} x={x} y={y} width="28" height="34" fill={["#d9c8d2", "#efd2c8", "#cbe5ba", "#dcdcdc", "#f2cfd4", "#d9d2b8", "#b9ecc6"][k]} />
      ))}
      <Roads color="#fff" width={5} list={["M120 455V500M150 455V560L110 600M180 520V620M300 455V780M340 500V780M380 500V620M225 520L215 640M195 560L260 590M90 560L130 620 200 690M265 560H400M265 590H400M265 660H400M265 690H390M265 740H390M200 700L150 780M120 700L190 780M200 455V500M360 455V490M400 455V490M90 475H440M220 650V740M240 650V740M285 640V780M360 640V780"]} />
      <path d="M475 455H545L530 640 420 610 440 560 470 500zM415 620L530 640 525 780H400z" fill="#b5dfa0" />
      <path d="M560 640L640 660 880 740V780H540z" fill="#dedbd8" />
      <path d="M600 555L735 590 720 650 650 640 620 600zM820 455H884V540L830 510z" fill="#a4da9c" stroke="#5f955c" strokeWidth="3" />
      <path d="M665 660L730 645 790 690 884 700V735L800 735 700 700zM820 745H884V780H820z" fill="#86bfe0" />
      <path d="M475 455V490L440 600 415 620 420 680 405 780" fill="none" stroke="#5f8fd0" strokeWidth="5" strokeDasharray="8 6" />
      <path d="M450 590q20-30 45-10t-20 30M430 650l60 40-20 60M450 740q40-20 60 10M480 540q20-20 40-4" fill="none" stroke="#8cc4d8" strokeWidth="7" />
      <path d="M755 455V530L810 515 800 455M600 555L625 600 650 640 715 650 735 590 640 565M800 620L860 640 880 610M800 620L815 660 840 685 884 665" fill="none" stroke="#a0728e" strokeWidth="7" />
      <Roads color="#fff" width={6} list={["M560 455L640 500 750 520 884 560M600 480V540M640 455V500M680 520V455M740 520L745 455M560 600L650 640M600 650V780M640 660V780M560 700H640M590 780V745H884M690 500L620 460"]} />
      <path d="M590 700h40v40h-40zM645 690h40v40h-40zM640 745h110v26H640zM758 740h45v30h-45z" fill="#c9c8bd" />
      <path d="M420 640L520 780M430 710L520 750M680 570V680M660 690V740" stroke="#777" strokeWidth="3" strokeDasharray="12 8" />
      <Roads color="#f4f3b4" width={9} casing="#c8c38f" list={["M325 455V780M265 560L370 560 430 590M90 745H220L260 712H390"]} />
      <Roads color="#f5c48c" width={15} casing="#c98f57" list={[
        "M88 510H260L330 500 440 495 545 495 700 550 800 600 884 608",
        "M265 455V640L262 780M195 640L260 620H410L530 640 640 680 720 720 800 745 884 735",
        "M550 455L535 560 530 780M200 635L130 700 95 780M465 455L460 510 420 600 400 680 390 780",
      ]} />
      <path d="M440 495V480q15-15 20 0v45M455 455v65M470 488h70v14h-70" fill="none" stroke="#555" strokeWidth="4" />
      <Label x="160" y="476" s="21" len="104">高新中四道</Label>
      <Label x="290" y="476" s="21">大道</Label>
      <Label x="220" y="518" s="25" bold len="78">滨海大道</Label>
      <Label x="300" y="628" s="22" bold len="58">白石路</Label>
      <Label x="497" y="642" s="20" r="8" bold len="58">白石路</Label>
      <Label x="266" y="668" s="20" r="-90" bold len="80">科苑南路</Label>
      <Label x="333" y="674" s="20" r="-90" bold len="80">科技南路</Label>
      <Label x="413" y="640" s="19" r="-80" bold len="70">沙河西路</Label>
      <Label x="545" y="692" s="20" r="-88" bold len="80">沙河东路</Label>
      <Label x="625" y="536" s="23" r="22" bold len="78">深南大道</Label>
      <Label x="765" y="571" s="30" len="118">沙河街道</Label>
      <Label x="742" y="726" s="22" r="20" bold len="60">白石路</Label>
      <Label x="124" y="706" s="24" len="60">大冲山</Label>
      <Label x="163" y="753" s="23" bold len="100">高新南七道</Label>
      <path d="M115 650l12 24h-24z" fill="#c98440" />
    </g>
    <Marker x={309} y={785} />
  </svg>
);

const employees = [
  ["audita", "Audit"],
  ["Manager A", "Manager"],
  ["Cashier A", "Cashier"],
];

export default function App() {
  return (
    <Stage>
      <GlobalStyle />
      <Frame>
        <Header>
          <MenuButton>
            <svg width="20" height="18" viewBox="0 0 20 18">
              <path d="M1.500 1.800h17M1.500 8.500h17M1.500 15.200h17" stroke="#e0202c" strokeWidth="2.400" strokeLinecap="round" />
            </svg>
          </MenuButton>
          <LogoBox><Logo /></LogoBox>
          <Tools>
            <OutlineButton $width={109.500} $track={-0.520}>Central Branch</OutlineButton>
            <ToolIcon $left={16} $top={11.500}><Expand /></ToolIcon>
            <ToolIcon $left={18} $top={9.500}><Sun /></ToolIcon>
            <ToolIcon $left={19.500} $top={8.500}>
              <Bell />
              <Badge>9</Badge>
            </ToolIcon>
            <UserButton>
              <svg width="12" height="11" viewBox="0 0 12 11" fill="#fff">
                <circle cx="6" cy="3" r="2.600" />
                <path d="M.8 10.800c0-3 1.600-4.500 3-4.700L6 7l2.200-.9c1.400.2 3 1.700 3 4.700z" />
              </svg>
              <svg width="8" height="6" viewBox="0 0 8 6">
                <path d="M1 1l3 3 3-3" fill="none" stroke="#fff" strokeWidth="1.300" />
              </svg>
            </UserButton>
          </Tools>
        </Header>
        <PageCard>
          <PageHead>
            <PageTitle>Branch Management</PageTitle>
            <OutlineButton $width={114.500} $track={-0.400}><Plus size={11} w={1.600} color="#f05a60" />Add Branch</OutlineButton>
          </PageHead>
          <MapShadow>
            <MapFrame $height={327.500}>
              <RegionMap />
              <ZoomButtons />
              <LayersControl><Layers /></LayersControl>
              <LeafletCredit />
            </MapFrame>
          </MapShadow>
          <SearchBox><Magnifier />Search branch...</SearchBox>
          <BranchCard>
            <BranchName>Branch B</BranchName>
            <BranchLine $height={20} $size={12.800} $track={-0.050} $gap={5.500} $color="#3c4656"><Pushpin w={9} h={16} />Location: China</BranchLine>
            <BranchLine $height={19} $size={12.200} $track={-0.480} $gap={5} $color="#8d93a0"><Calendar />Created: 03/04/2025</BranchLine>
            <CardMap>
              <MapFrame $height={109} $radius={4}><DistrictMap /></MapFrame>
            </CardMap>
          </BranchCard>
        </PageCard>
        <Overlay>
          <Modal>
            <CloseButton>
              <svg width="12" height="12" viewBox="0 0 12 12">
                <path d="M1.800 1.800l8.400 8.400M10.200 1.800l-8.400 8.400" stroke="#4b5563" strokeWidth="3" strokeLinecap="round" />
              </svg>
            </CloseButton>
            <ModalTitle><Pushpin />Branch A (Taiwan)</ModalTitle>
            <MapShadow $soft>
              <MapFrame $height={327.500}>
                <CityMap />
                <ZoomButtons />
                <LeafletCredit />
              </MapFrame>
            </MapShadow>
            <SectionTitle $top={18.500} $track={-0.400}><People />Employee List</SectionTitle>
            <Table>
              <Row $head>
                <Cell $head $first>Employee Name</Cell>
                <Cell $head>Role</Cell>
              </Row>
              {employees.map(([name, role], i) => (
                <Row key={name} $last={i === 2}>
                  <Cell $first>{name}</Cell>
                  <Cell>{role}</Cell>
                </Row>
              ))}
            </Table>
            <Pager>
              <PagerButton $width={75}>Previous</PagerButton>
              Page 1
              <PagerButton $width={54.500}>Next</PagerButton>
            </Pager>
            <SectionTitle $top={-2} $track={-0.420}><Box />Sales Graph</SectionTitle>
            <Controls>
              <RangeGroup>
                <RangeButton $width={54} $active>Daily</RangeButton>
                <RangeButton $width={67.500}>Weekly</RangeButton>
                <RangeButton $width={73.500}>Monthly</RangeButton>
                <RangeButton $width={59.500}>Yearly</RangeButton>
              </RangeGroup>
              <SelectBox>
                All Products
                <svg width="10" height="8" viewBox="0 0 10 8">
                  <path d="M1.200 1L5 4.700 8.800 1" fill="none" stroke="#3d4654" strokeWidth="1.900" />
                </svg>
              </SelectBox>
            </Controls>
            <Chart>
              {[6, 5, 4, 3].map((n) => (
                <Tick key={n}>{n}<GridLine /></Tick>
              ))}
            </Chart>
          </Modal>
        </Overlay>
      </Frame>
    </Stage>
  );
}
